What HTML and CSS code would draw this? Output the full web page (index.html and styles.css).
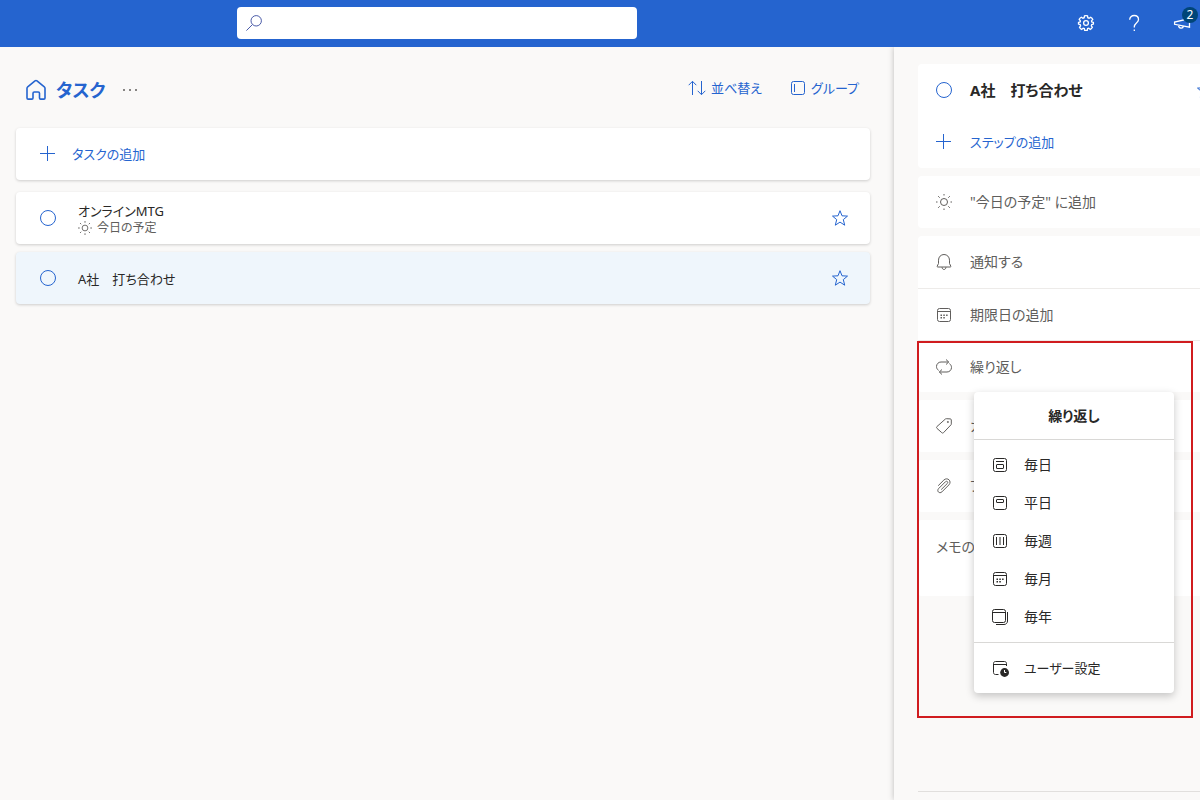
FILE: index.html
```html
<!DOCTYPE html>
<html lang="ja">
<head>
<meta charset="utf-8">
<meta name="viewport" content="width=device-width, initial-scale=1">
<title>タスク</title>
<link rel="stylesheet" href="styles.css">
</head>
<body>
<div class="app">
  <header class="topbar">
    <label class="search">
      <svg class="icon" viewBox="0 0 16 16" aria-hidden="true"><circle cx="10.200" cy="5.800" r="5.200"/><path d="M6.400 9.600.4 15.600"/></svg>
      <input class="search-input" type="text" aria-label="検索">
    </label>
    <nav class="topbar-actions">
      <button class="top-button" type="button" aria-label="設定">
        <svg class="icon icon-gear" viewBox="0 0 16 16" aria-hidden="true"><path d="M6.500.8Q8 .3 9.500.8l.3 1.900 1.300.5 1.600-1q1.500.9 2.100 2.200L13.500 5.900l.2 1 1.700.6v1.600l-1.700.5-.4 1.200 1.100 1.500q-.8 1.500-2.100 2.100l-1.500-1.200-1.200.4-.3 1.700q-1.400.3-2.700 0l-.3-1.700-1.200-.4-1.500 1.200q-1.400-.7-2.100-2.100l1.100-1.500-.4-1.200-1.700-.5V7.500l1.700-.6.2-1L1.200 4.400q.7-1.400 2.100-2.200l1.600 1 1.300-.5z"/><circle cx="8" cy="8" r="2.400"/></svg>
      </button>
      <button class="top-button" type="button" aria-label="ヘルプ">
        <svg class="icon" viewBox="0 0 16 16" aria-hidden="true"><path d="M3.700 4.800C3.700 2.200 5.600.5 8.200.5s4.300 1.600 4.300 4c0 3.400-4.200 3.700-4.200 7.300v.7M8.300 14.600v1.400"/></svg>
      </button>
      <button class="top-button" type="button" aria-label="お知らせ">
        <svg class="icon" viewBox="0 0 16 16" aria-hidden="true"><path d="M15.500 3.500v8.700L.6 9.300V7.100zM4.600 10.200c0 3.600 4.400 3.800 4.800.9"/></svg>
        <span class="badge">2</span>
      </button>
    </nav>
  </header>

  <div class="columns">
    <main class="list-pane">
      <div class="list-toolbar">
        <svg class="icon icon-home" viewBox="0 0 20 20" aria-hidden="true"><path d="M1 8.200c0-.6.200-1 .7-1.400L9 .9c.6-.5 1.400-.5 2 0l7.300 5.900c.5.400.7.800.7 1.400v9.800c0 .7-.4 1.100-1.100 1.100h-3.300c-.7 0-1.100-.4-1.100-1.100v-4.700c0-.8-.5-1.300-1.300-1.300H8.300c-.8 0-1.300.5-1.300 1.300v4.700c0 .7-.4 1.100-1.100 1.100H2.100C1.400 19.100 1 18.700 1 18z"/></svg>
        <h1 class="list-title">タスク</h1>
        <button class="more-button" type="button" aria-label="リストのオプション">
          <svg class="icon icon-more" viewBox="0 0 16 16" aria-hidden="true"><circle cx="2" cy="8" r="1"/><circle cx="8" cy="8" r="1"/><circle cx="14" cy="8" r="1"/></svg>
        </button>
        <div class="list-commands">
          <button class="command" type="button">
            <svg class="icon icon-wide" viewBox="0 0 18 16" aria-hidden="true"><path d="M4.500 15V1.500M.7 5.200l3.800-3.900 3.800 3.900M13.500 1v13.500M9.700 10.800l3.800 3.900 3.800-3.900"/></svg>
            並べ替え
          </button>
          <button class="command" type="button">
            <svg class="icon" viewBox="0 0 16 16" aria-hidden="true"><rect x="1.500" y="1.500" width="13" height="13" rx="2"/><path d="M4.500 4v8"/></svg>
            グループ
          </button>
        </div>
      </div>

      <button class="add-task" type="button">
        <svg class="icon" viewBox="0 0 16 16" aria-hidden="true"><path d="M7.500 0v15M0 7.500h15"/></svg>
        タスクの追加
      </button>

      <ul class="tasks">
        <li class="task">
          <input class="check" type="checkbox" id="task-1">
          <label class="task-text" for="task-1">
            <span>オンラインMTG</span>
            <span class="task-note">
              <svg class="icon icon-small" viewBox="0 0 16 16" aria-hidden="true"><circle cx="8" cy="8" r="3.300"/><path d="M8 0v2M8 14v2M0 8h2M14 8h2M2.300 2.300l1.400 1.400M12.300 12.300l1.400 1.400M2.300 13.700l1.400-1.400M12.300 3.700l1.400-1.400"/></svg>
              今日の予定
            </span>
          </label>
          <button class="star" type="button" aria-label="重要にする">
            <svg class="icon" viewBox="0 0 16 16" aria-hidden="true"><path d="M8 .7l2 5.100 5.500.3-4.200 3.500 1.400 5.600L8 12.100l-4.700 3.100 1.400-5.600L.5 6.100 6 5.800z"/></svg>
          </button>
        </li>
        <li class="task task-selected">
          <input class="check" type="checkbox" id="task-2">
          <label class="task-text" for="task-2">A社　打ち合わせ</label>
          <button class="star" type="button" aria-label="重要にする">
            <svg class="icon" viewBox="0 0 16 16" aria-hidden="true"><path d="M8 .7l2 5.100 5.500.3-4.200 3.500 1.400 5.600L8 12.100l-4.700 3.100 1.400-5.600L.5 6.100 6 5.800z"/></svg>
          </button>
        </li>
      </ul>
    </main>

    <aside class="detail-pane">
      <div class="detail-body">
        <section class="card">
          <div class="row">
            <input class="check" type="checkbox" id="detail-task">
            <label class="detail-title" for="detail-task">A社　打ち合わせ</label>
            <button class="star star-edge" type="button" aria-label="重要にする">
              <svg class="icon" viewBox="0 0 16 16" aria-hidden="true"><path d="M8 .7l2 5.100 5.500.3-4.200 3.500 1.400 5.600L8 12.100l-4.700 3.100 1.400-5.600L.5 6.100 6 5.800z"/></svg>
            </button>
          </div>
          <button class="row row-accent" type="button">
            <svg class="icon" viewBox="0 0 16 16" aria-hidden="true"><path d="M7.500 0v15M0 7.500h15"/></svg>
            ステップの追加
          </button>
        </section>

        <section class="card">
          <button class="row" type="button">
            <svg class="icon" viewBox="0 0 16 16" aria-hidden="true"><circle cx="8" cy="8" r="3.500"/><path d="M8 0v1.500M8 14.500V16M0 8h1.500M14.500 8H16M2.200 2.200l1.500 1.500M12.300 12.300l1.500 1.500M2.200 13.800l1.500-1.500M12.300 3.700l1.500-1.500"/></svg>
            "今日の予定" に追加
          </button>
        </section>

        <section class="card">
          <button class="row" type="button">
            <svg class="icon" viewBox="0 0 16 16" aria-hidden="true"><path d="M2.500 6.200C2.500 2.900 4.900.5 8 .5s5.500 2.400 5.500 5.700v3.300l1.300 2.600c.2.500 0 .9-.5.900H1.700c-.5 0-.7-.4-.5-.9l1.300-2.600zM6 13.200c.2 1.500 1 2.300 2 2.300s1.800-.8 2-2.300"/></svg>
            通知する
          </button>
          <button class="row row-divided" type="button">
            <svg class="icon" viewBox="0 0 16 16" aria-hidden="true"><rect x="1.500" y="1.500" width="13" height="13" rx="2"/><path d="M1.500 4.500h13"/><path class="dots" d="M4.500 8.200h8M4.500 10.800h5"/></svg>
            期限日の追加
          </button>
          <div class="repeat">
            <button class="row row-divided" type="button" aria-haspopup="menu" aria-expanded="true">
              <svg class="icon" viewBox="0 0 16 16" aria-hidden="true"><path d="M10 .5l2.700 2.500L10 5.500M12.600 3H5C2.500 3 .5 5 .5 7.500c0 1.700.8 3 2.100 3.900M6 15.500L3.300 13 6 10.500M3.400 13H11c2.500 0 4.500-2 4.500-4.500 0-1.700-.8-3-2.100-3.900"/></svg>
              繰り返し
            </button>
            <div class="highlight"></div>
            <div class="menu" role="menu" aria-label="繰り返し">
              <h2 class="menu-title">繰り返し</h2>
              <div class="menu-group">
                <button class="menu-item" type="button" role="menuitem">
                  <svg class="icon" viewBox="0 0 16 16" aria-hidden="true"><rect x="1.500" y="1.500" width="13" height="13" rx="2"/><path d="M4 4.500h8"/><rect x="4.500" y="7.500" width="7" height="4" rx=".5"/></svg>
                  毎日
                </button>
                <button class="menu-item" type="button" role="menuitem">
                  <svg class="icon" viewBox="0 0 16 16" aria-hidden="true"><rect x="1.500" y="1.500" width="13" height="13" rx="2"/><rect x="4.500" y="4.500" width="7" height="3" rx=".5"/></svg>
                  平日
                </button>
                <button class="menu-item" type="button" role="menuitem">
                  <svg class="icon" viewBox="0 0 16 16" aria-hidden="true"><rect x="1.500" y="1.500" width="13" height="13" rx="2"/><path d="M4.500 4v8M8 4v8M11.500 4v8"/></svg>
                  毎週
                </button>
                <button class="menu-item" type="button" role="menuitem">
                  <svg class="icon" viewBox="0 0 16 16" aria-hidden="true"><rect x="1.500" y="1.500" width="13" height="13" rx="2"/><path d="M1.500 4.500h13"/><path class="dots" d="M4.500 8.200h8M4.500 10.800h5"/></svg>
                  毎月
                </button>
                <button class="menu-item" type="button" role="menuitem">
                  <svg class="icon" viewBox="0 0 16 16" aria-hidden="true"><rect x=".5" y=".5" width="13" height="13" rx="2"/><path d="M.5 3.500h13M15.500 3v9c0 2-1.500 3.500-3.500 3.500H4"/></svg>
                  毎年
                </button>
              </div>
              <div class="menu-group menu-footer">
                <button class="menu-item" type="button" role="menuitem">
                  <svg class="icon" viewBox="0 0 16 16" aria-hidden="true"><path d="M6.500 14.500h-3c-1.200 0-2-.8-2-2v-9c0-1.200.8-2 2-2h9c1.200 0 2 .8 2 2V6M1.500 4.500h13"/><circle class="solid" cx="12.600" cy="12.500" r="4.400"/><path class="clock-hand" d="M12.500 10v2.500h1.800"/></svg>
                  ユーザー設定
                </button>
              </div>
            </div>
          </div>
        </section>

        <section class="card">
          <button class="row row-clipped" type="button">
            <svg class="icon" viewBox="0 0 16 16" aria-hidden="true"><path d="M9.300 1.100c.3-.3.600-.4 1-.4l4 .2c.6 0 1 .4 1 1v4c0 .4-.1.700-.4 1L7.500 14.700c-.5.500-1.200.500-1.700 0L.9 10.300c-.5-.5-.5-1.200 0-1.700z"/><circle cx="11.900" cy="4" r=".6"/></svg>
            カテゴリの選択
          </button>
        </section>

        <section class="card">
          <button class="row" type="button">
            <svg class="icon" viewBox="0 0 16 16" aria-hidden="true"><path d="M2.200 7.700l5.600-5.600c3.600-3.500 8.500 1.100 5.100 4.800l-7 7c-2.400 2.200-5.500-.7-3.400-3.200l6.900-6.900c1.500-1.400 3.200.3 1.900 1.700l-6.100 6.100"/></svg>
            ファイルの追加
          </button>
        </section>

        <textarea class="memo" aria-label="メモ" placeholder="メモの追加"></textarea>
      </div>
      <footer class="detail-footer"></footer>
    </aside>
  </div>
</div>
</body>
</html>
```

FILE: styles.css
```css
:root {
  --accent: #2564cf;
  --surface: #faf9f8;
  --text: #292827;
  --muted: #605e5c;
  --card-shadow: 0 1px 3px rgba(0, 0, 0, 0.18);
}

* {
  box-sizing: border-box;
}

body {
  margin: 0;
  color: var(--text);
  font: 14px/20px "Noto Sans", "Noto Sans CJK JP", sans-serif;
  font-feature-settings: "palt";
}

button,
input,
textarea {
  margin: 0;
  padding: 0;
  border: 0;
  background: none;
  color: inherit;
  font: inherit;
  font-feature-settings: inherit;
}

button {
  display: flex;
  align-items: center;
  text-align: left;
  white-space: nowrap;
}

h1,
h2,
ul {
  margin: 0;
  padding: 0;
}

.app {
  display: flex;
  flex-direction: column;
  height: 100vh;
  overflow: hidden;
  background: var(--surface);
}

.icon {
  flex: none;
  width: 16px;
  height: 16px;
  overflow: visible;
  fill: none;
  stroke: currentColor;
  stroke-width: 1;
}

.icon .solid,
.icon-more {
  fill: currentColor;
  stroke: none;
}

.icon .clock-hand {
  stroke: #fff;
}

.icon .dots {
  stroke-width: 1.4;
  stroke-dasharray: 1.5 1.3;
}

.icon-home {
  width: 20px;
  height: 20px;
  stroke-width: 1.6;
}

.icon-wide {
  width: 18px;
}

.icon-small {
  width: 14px;
  height: 14px;
}

/* Top bar */

.topbar {
  position: relative;
  z-index: 3;
  display: flex;
  flex: none;
  align-items: center;
  justify-content: space-between;
  height: 47px;
  padding: 0 0 2px 237px;
  background: var(--accent);
  color: #fff;
}

.search {
  display: flex;
  align-items: center;
  gap: 8px;
  width: 400px;
  height: 32px;
  padding: 0 9px;
  border-radius: 4px;
  background: #fff;
  color: #4a5ba8;
}

.search-input {
  flex: 1;
  min-width: 0;
  color: var(--text);
  outline: 0;
}

.topbar-actions {
  display: flex;
}

.top-button {
  position: relative;
  justify-content: center;
  width: 48px;
  height: 45px;
}

.top-button .icon {
  stroke-width: 1.3;
}

.top-button:last-child {
  width: 42px;
}

.top-button:last-child .icon {
  margin-left: 6px;
}

.badge {
  position: absolute;
  top: 7px;
  right: 2px;
  width: 16px;
  height: 16px;
  border-radius: 50%;
  background: #004578;
  font-size: 12px;
  line-height: 16px;
  text-align: center;
}

/* Task list */

.columns {
  display: flex;
  flex: 1;
  min-height: 0;
}

.list-pane {
  flex: 1;
  min-width: 0;
  padding: 0 24px 0 16px;
}

.list-toolbar {
  display: flex;
  align-items: center;
  height: 81px;
  padding: 5px 11px 0 10px;
  color: var(--accent);
}

.list-title {
  margin-left: 10px;
  font-size: 18px;
  line-height: 26px;
}

.more-button {
  margin-left: 16px;
  color: var(--muted);
}

.list-commands {
  display: flex;
  gap: 28px;
  margin: 0 0 4px auto;
}

.command {
  gap: 5px;
  font-size: 13px;
}

.add-task {
  gap: 16px;
  width: 100%;
  height: 52px;
  padding-left: 24px;
  border-radius: 4px;
  background: #fff;
  box-shadow: var(--card-shadow);
  color: var(--accent);
  font-size: 13px;
}

.tasks {
  display: flex;
  flex-direction: column;
  gap: 8px;
  margin-top: 12px;
  list-style: none;
}

.task {
  display: flex;
  align-items: center;
  height: 52px;
  padding: 0 22px 0 24px;
  border-radius: 4px;
  background: #fff;
  box-shadow: var(--card-shadow);
}

.task-selected {
  background: #eff6fc;
}

.check {
  flex: none;
  width: 16px;
  height: 16px;
  border: 1px solid var(--accent);
  border-radius: 50%;
  appearance: none;
}

.task-text {
  display: flex;
  flex: 1;
  flex-direction: column;
  margin-left: 22px;
  padding-top: 2px;
  font-size: 13px;
  line-height: 18px;
}

.task-note {
  display: flex;
  align-items: center;
  gap: 5px;
  color: var(--muted);
  font-size: 12px;
  line-height: 16px;
}

.star {
  color: var(--accent);
}

/* Detail pane */

.detail-pane {
  display: flex;
  flex: 0 0 306px;
  flex-direction: column;
  overflow: hidden;
  padding: 17px 0 0 24px;
  background: var(--surface);
  box-shadow: 0 0 6px rgba(0, 0, 0, 0.25);
}

.detail-body {
  display: flex;
  flex: 1;
  flex-direction: column;
  gap: 8px;
}

.card {
  border-radius: 4px 0 0 4px;
  background: #fff;
}

.row {
  display: flex;
  align-items: center;
  gap: 18px;
  width: 100%;
  height: 52px;
  padding-left: 18px;
  color: var(--muted);
}

.row-accent {
  color: var(--accent);
  font-size: 13px;
}

.row-divided {
  border-top: 1px solid #edebe9;
}

.detail-title {
  flex: 1;
  color: var(--text);
  font-size: 15px;
  font-weight: 700;
  white-space: nowrap;
}

.star-edge {
  margin-right: -13px;
}

.repeat {
  position: relative;
}

.highlight {
  position: absolute;
  top: 1px;
  left: -1px;
  z-index: 1;
  width: 276px;
  height: 377px;
  border: 2px solid #d01c1f;
  pointer-events: none;
}

.menu {
  position: absolute;
  top: 52px;
  left: 56px;
  z-index: 2;
  width: 200px;
  border-radius: 4px;
  background: #fff;
  box-shadow: 0 3px 8px rgba(0, 0, 0, 0.22);
}

.menu-title {
  padding: 14px 0 13px;
  border-bottom: 1px solid #d9d8d6;
  font-size: 14px;
  line-height: 20px;
  text-align: center;
}

.menu-group {
  padding: 6px 0;
}

.menu-footer {
  border-top: 1px solid #d9d8d6;
}

.menu-item {
  gap: 16px;
  width: 100%;
  height: 38px;
  padding-left: 18px;
}

.menu-footer .menu-item {
  font-size: 13px;
}

.memo {
  display: block;
  width: 100%;
  height: 76px;
  padding: 17px 18px;
  border-radius: 4px 0 0 4px;
  background: #fff;
  outline: 0;
  resize: none;
}

.memo::placeholder {
  color: var(--muted);
  opacity: 1;
}

.detail-footer {
  height: 9px;
  border-top: 1px solid #e1dfdd;
}
```
